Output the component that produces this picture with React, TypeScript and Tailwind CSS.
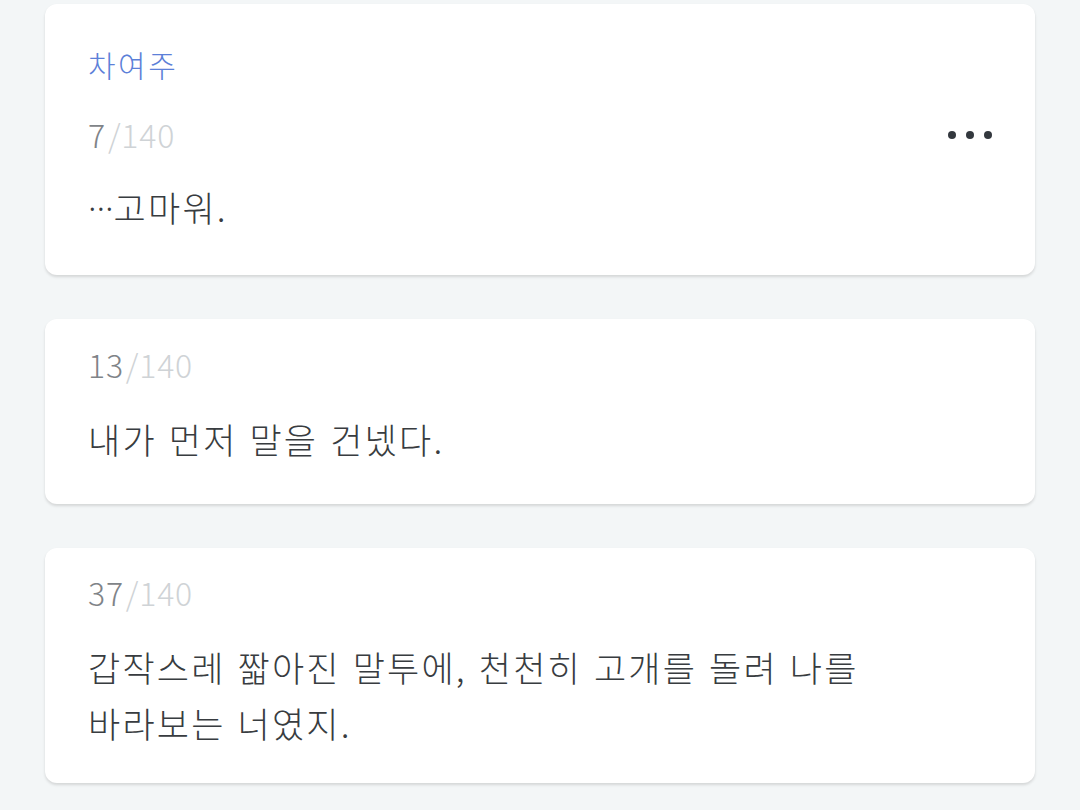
const font = { fontFamily: '"Noto Sans CJK KR", "Noto Sans", sans-serif' };

function Counter({ n }: { n: number }) {
  return (
    <div className="text-[32px] leading-[48px] tracking-[0.8px] font-light">
      <span className="text-[#7f8488]">{n}</span>
      <span className="ml-[2px] text-[#cfd3d6]">/140</span>
    </div>
  );
}

function Dots() {
  return (
    <div className="mt-[2px] flex items-center gap-[10px]">
      <span className="block h-[8px] w-[8px] rounded-full bg-[#33383e]" />
      <span className="block h-[8px] w-[8px] rounded-full bg-[#33383e]" />
      <span className="block h-[8px] w-[8px] rounded-full bg-[#33383e]" />
    </div>
  );
}

const body = "text-[35px] leading-[56px] text-[#383c40] font-light tracking-[2.2px] [word-spacing:2px]";

export default function App() {
  return (
    <div className="min-h-[810px] w-[1080px] bg-[#f3f6f7] px-[45px] pt-[4px]" style={font}>
      <div className="flex flex-col gap-[44px]">
        {/* 카드 1 */}
        <div className="rounded-[12px] bg-white pl-[43px] pr-[43px] pt-[38px] pb-[40px] shadow-[0_2px_3px_rgba(0,0,0,0.13)]">
          <div className="text-[30px] leading-[45px] text-[#5c80d8] font-light tracking-[2.5px]">차여주</div>
          <div className="mt-[23px] flex items-center justify-between">
            <Counter n={7} />
            <Dots />
          </div>
          <div className={`mt-[21px] h-[56px] ${body}`}>
            <span className="font-['Noto_Sans',sans-serif] leading-[10px] tracking-normal align-[11px]">…</span>
            <span>고마워.</span>
          </div>
        </div>

        {/* 카드 2 */}
        <div className="rounded-[12px] bg-white px-[43px] pt-[21px] pb-[37px] shadow-[0_2px_3px_rgba(0,0,0,0.13)]">
          <Counter n={13} />
          <div className={`mt-[23px] ${body}`}>내가 먼저 말을 건넸다.</div>
        </div>

        {/* 카드 3 */}
        <div className="rounded-[12px] bg-white px-[43px] pt-[20px] pb-[32px] shadow-[0_2px_3px_rgba(0,0,0,0.13)]">
          <Counter n={37} />
          <div className={`mt-[23px] ${body}`}>
            갑작스레 짧아진 말투에, 천천히 고개를 돌려 나를
            <br />
            바라보는 너였지.
          </div>
        </div>
      </div>
    </div>
  );
}
